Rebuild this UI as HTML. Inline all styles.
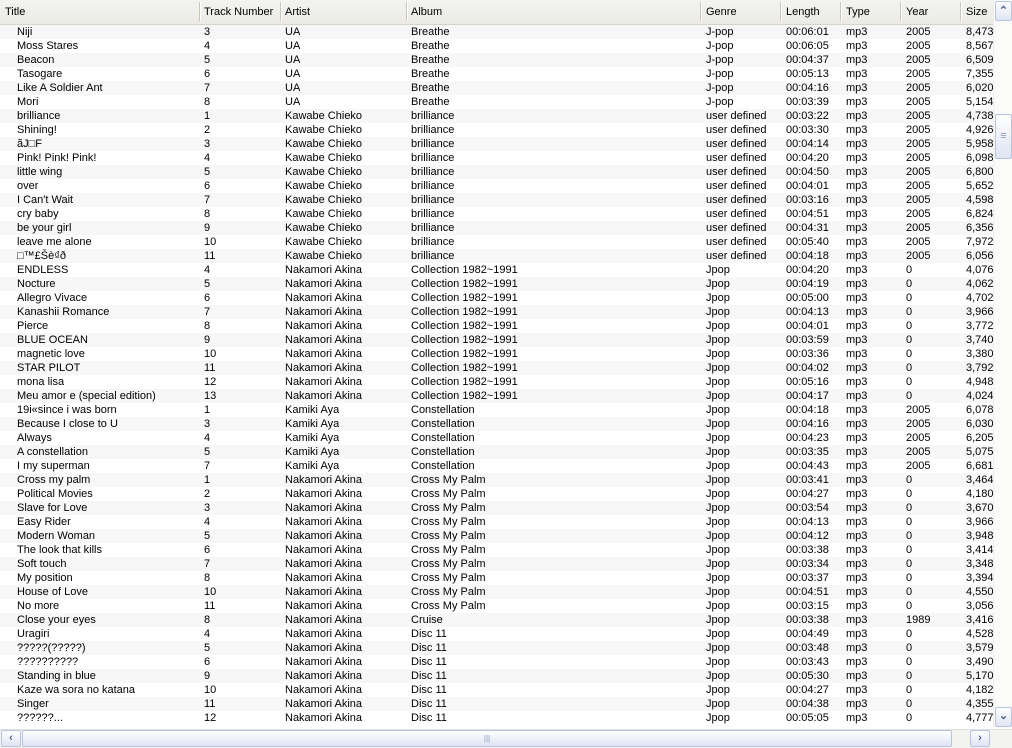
<!DOCTYPE html><html><head><style>
body{margin:0;width:1012px;height:747px;overflow:hidden;background:#fff;font-family:"Liberation Sans",Arial,sans-serif;font-size:11px;color:#000;position:relative}
.h{position:absolute;top:0;left:0;width:993px;height:24px;background:linear-gradient(#f3f3f0,#ebeae5);border-bottom:1px solid #d6d3c8}
.h span{position:absolute;top:6px;color:#000}
.h i{position:absolute;top:2px;width:1px;height:19px;background:#fff;border-left:1px solid #cbc7b8}
.r{position:absolute;left:0;width:993px;height:14px;line-height:14px;white-space:nowrap}
.r span{position:absolute;top:0;overflow:hidden}
.vs{position:absolute;left:993px;top:0;width:19px;height:729px;background:#fbfbf9;border-left:1px solid #eee}
.btn{position:absolute;background:linear-gradient(#fff,#dfe4f3);border:1px solid #b7c4e0;border-radius:2px;box-sizing:border-box;text-align:center;color:#4d6185;font-weight:bold;font-size:11px}
.hs{position:absolute;left:0;top:729px;width:1012px;height:18px;background:#f3f3f0;border-top:1px solid #e0e0e0}
</style></head><body>
<div class="h">
<span style="left:5px">Title</span><i style="left:199px"></i>
<span style="left:204px">Track Number</span><i style="left:280px"></i>
<span style="left:285px">Artist</span><i style="left:406px"></i>
<span style="left:411px">Album</span><i style="left:700px"></i>
<span style="left:706px">Genre</span><i style="left:780px"></i>
<span style="left:786px">Length</span><i style="left:840px"></i>
<span style="left:846px">Type</span><i style="left:900px"></i>
<span style="left:906px">Year</span><i style="left:960px"></i>
<span style="left:966px">Size</span>
</div>
<div id="rows" style="position:absolute;top:25px;left:0"></div>
<div class="vs">
<div class="btn" style="left:1px;top:1px;width:17px;height:20px;line-height:18px">&#8963;</div>
<div class="btn" style="left:1px;top:114px;width:17px;height:45px;line-height:43px;font-weight:normal;color:#8a9ab8">≡</div>
<div class="btn" style="left:1px;top:707px;width:17px;height:20px;line-height:16px">&#8964;</div>
</div>
<div class="hs">
<div class="btn" style="left:1px;top:0;width:20px;height:17px;line-height:15px">‹</div>
<div class="btn" style="left:22px;top:0;width:930px;height:17px;line-height:15px;font-weight:normal;color:#8a9ab8;font-size:8px">|||</div>
<div class="btn" style="left:970px;top:0;width:20px;height:17px;line-height:15px">›</div>
</div>
<script>
var d=[
["Niji",3,"UA","Breathe","J-pop","00:06:01","2005","8,473"],
["Moss Stares",4,"UA","Breathe","J-pop","00:06:05","2005","8,567"],
["Beacon",5,"UA","Breathe","J-pop","00:04:37","2005","6,509"],
["Tasogare",6,"UA","Breathe","J-pop","00:05:13","2005","7,355"],
["Like A Soldier Ant",7,"UA","Breathe","J-pop","00:04:16","2005","6,020"],
["Mori",8,"UA","Breathe","J-pop","00:03:39","2005","5,154"],
["brilliance",1,"Kawabe Chieko","brilliance","user defined","00:03:22","2005","4,738"],
["Shining!",2,"Kawabe Chieko","brilliance","user defined","00:03:30","2005","4,926"],
["ãJ□F",3,"Kawabe Chieko","brilliance","user defined","00:04:14","2005","5,958"],
["Pink! Pink! Pink!",4,"Kawabe Chieko","brilliance","user defined","00:04:20","2005","6,098"],
["little wing",5,"Kawabe Chieko","brilliance","user defined","00:04:50","2005","6,800"],
["over",6,"Kawabe Chieko","brilliance","user defined","00:04:01","2005","5,652"],
["I Can't Wait",7,"Kawabe Chieko","brilliance","user defined","00:03:16","2005","4,598"],
["cry baby",8,"Kawabe Chieko","brilliance","user defined","00:04:51","2005","6,824"],
["be your girl",9,"Kawabe Chieko","brilliance","user defined","00:04:31","2005","6,356"],
["leave me alone",10,"Kawabe Chieko","brilliance","user defined","00:05:40","2005","7,972"],
["□™£Šè₫ð",11,"Kawabe Chieko","brilliance","user defined","00:04:18","2005","6,056"],
["ENDLESS",4,"Nakamori Akina","Collection 1982~1991","Jpop","00:04:20","0","4,076"],
["Nocture",5,"Nakamori Akina","Collection 1982~1991","Jpop","00:04:19","0","4,062"],
["Allegro Vivace",6,"Nakamori Akina","Collection 1982~1991","Jpop","00:05:00","0","4,702"],
["Kanashii Romance",7,"Nakamori Akina","Collection 1982~1991","Jpop","00:04:13","0","3,966"],
["Pierce",8,"Nakamori Akina","Collection 1982~1991","Jpop","00:04:01","0","3,772"],
["BLUE OCEAN",9,"Nakamori Akina","Collection 1982~1991","Jpop","00:03:59","0","3,740"],
["magnetic love",10,"Nakamori Akina","Collection 1982~1991","Jpop","00:03:36","0","3,380"],
["STAR PILOT",11,"Nakamori Akina","Collection 1982~1991","Jpop","00:04:02","0","3,792"],
["mona lisa",12,"Nakamori Akina","Collection 1982~1991","Jpop","00:05:16","0","4,948"],
["Meu amor e (special edition)",13,"Nakamori Akina","Collection 1982~1991","Jpop","00:04:17","0","4,024"],
["19i«since i was born",1,"Kamiki Aya","Constellation","Jpop","00:04:18","2005","6,078"],
["Because I close to U",3,"Kamiki Aya","Constellation","Jpop","00:04:16","2005","6,030"],
["Always",4,"Kamiki Aya","Constellation","Jpop","00:04:23","2005","6,205"],
["A constellation",5,"Kamiki Aya","Constellation","Jpop","00:03:35","2005","5,075"],
["I my superman",7,"Kamiki Aya","Constellation","Jpop","00:04:43","2005","6,681"],
["Cross my palm",1,"Nakamori Akina","Cross My Palm","Jpop","00:03:41","0","3,464"],
["Political Movies",2,"Nakamori Akina","Cross My Palm","Jpop","00:04:27","0","4,180"],
["Slave for Love",3,"Nakamori Akina","Cross My Palm","Jpop","00:03:54","0","3,670"],
["Easy Rider",4,"Nakamori Akina","Cross My Palm","Jpop","00:04:13","0","3,966"],
["Modern Woman",5,"Nakamori Akina","Cross My Palm","Jpop","00:04:12","0","3,948"],
["The look that kills",6,"Nakamori Akina","Cross My Palm","Jpop","00:03:38","0","3,414"],
["Soft touch",7,"Nakamori Akina","Cross My Palm","Jpop","00:03:34","0","3,348"],
["My position",8,"Nakamori Akina","Cross My Palm","Jpop","00:03:37","0","3,394"],
["House of Love",10,"Nakamori Akina","Cross My Palm","Jpop","00:04:51","0","4,550"],
["No more",11,"Nakamori Akina","Cross My Palm","Jpop","00:03:15","0","3,056"],
["Close your eyes",8,"Nakamori Akina","Cruise","Jpop","00:03:38","1989","3,416"],
["Uragiri",4,"Nakamori Akina","Disc 11","Jpop","00:04:49","0","4,528"],
["?????(?????)",5,"Nakamori Akina","Disc 11","Jpop","00:03:48","0","3,579"],
["??????????",6,"Nakamori Akina","Disc 11","Jpop","00:03:43","0","3,490"],
["Standing in blue",9,"Nakamori Akina","Disc 11","Jpop","00:05:30","0","5,170"],
["Kaze wa sora no katana",10,"Nakamori Akina","Disc 11","Jpop","00:04:27","0","4,182"],
["Singer",11,"Nakamori Akina","Disc 11","Jpop","00:04:38","0","4,355"],
["??????...",12,"Nakamori Akina","Disc 11","Jpop","00:05:05","0","4,777"]];
var h="";d.forEach(function(r,i){h+='<div class="r" style="top:'+(i*14)+'px;background:'+(i%2?'#fff':'#f7f7f7')+'"><span style="left:17px">'+r[0]+'</span><span style="left:204px">'+r[1]+'</span><span style="left:285px">'+r[2]+'</span><span style="left:411px">'+r[3]+'</span><span style="left:706px">'+r[4]+'</span><span style="left:786px">'+r[5]+'</span><span style="left:846px">mp3</span><span style="left:906px">'+r[6]+'</span><span style="left:966px;width:27px">'+r[7]+'</span></div>'});
document.getElementById("rows").innerHTML=h;
</script>
</body></html>
